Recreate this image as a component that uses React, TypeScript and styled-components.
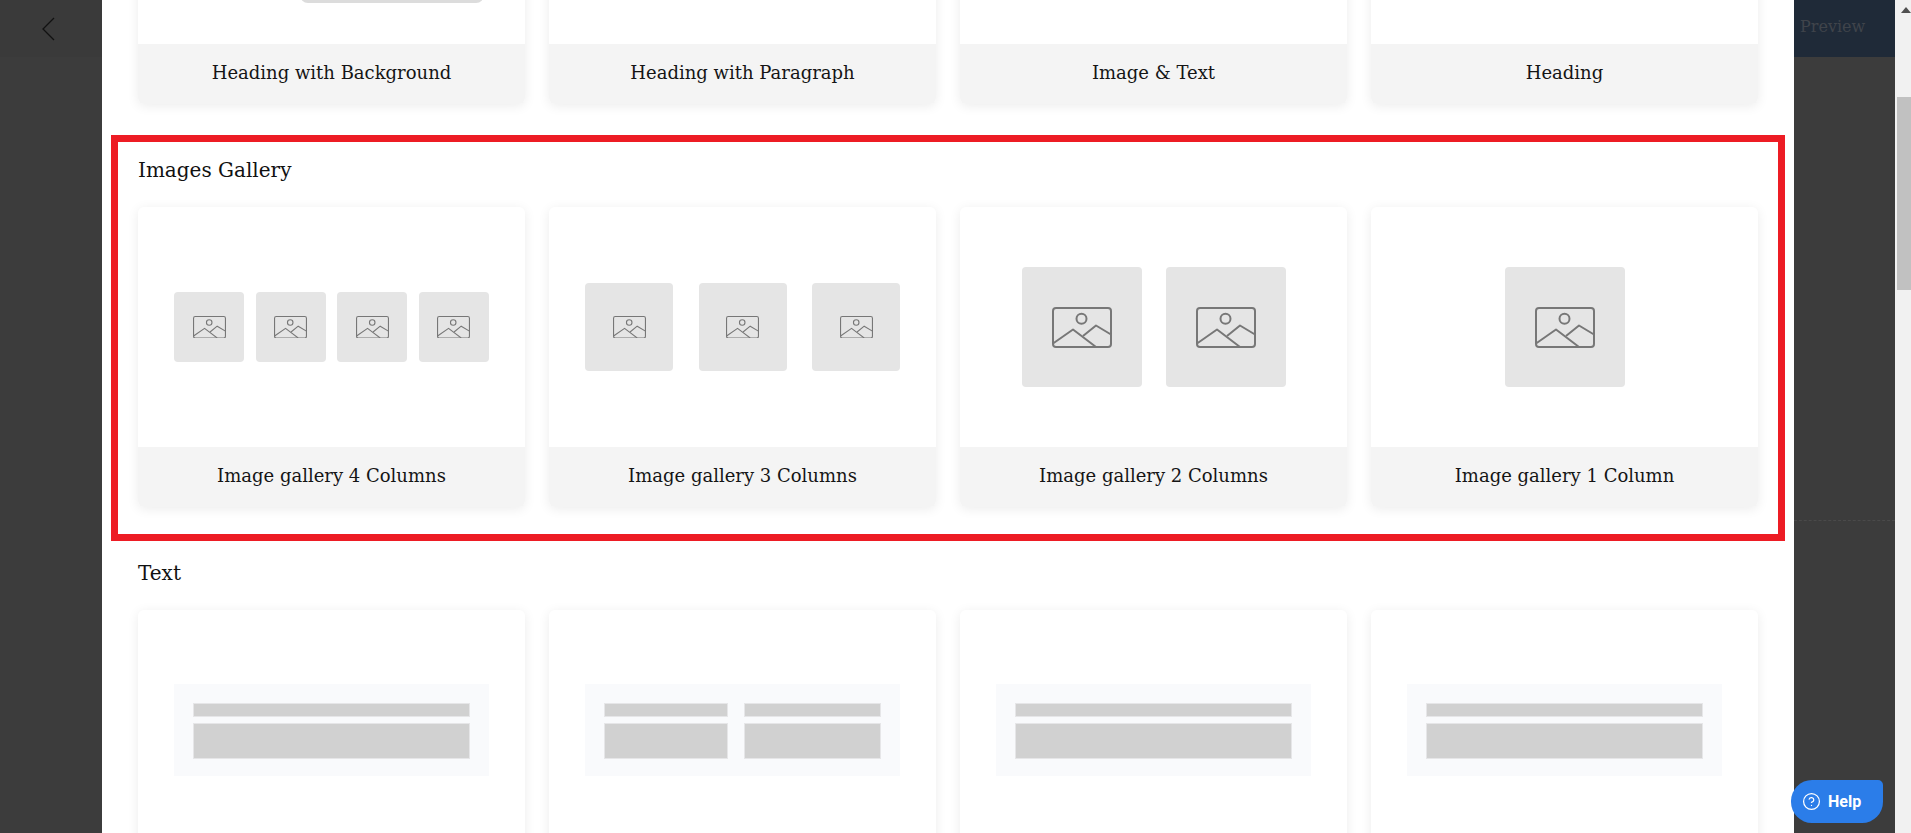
import * as React from 'react'
import styled, { createGlobalStyle } from 'styled-components'
import { CircleHelp } from 'lucide-react'

const GlobalStyle = createGlobalStyle`
  html, body {
    margin: 0;
    padding: 0;
    height: 100%;
    overflow: hidden;
    background: #3c3c3c;
  }

  * {
    box-sizing: border-box;
  }
`

const Page = styled.div`
  display: flex;
  width: 1911px;
  height: 833px;
  overflow: hidden;
  background: #3c3c3c;
  font-family: "DejaVu Serif", "Liberation Serif", serif;
`

const LeftRail = styled.div`
  flex: 0 0 102px;
`

const BackBar = styled.div`
  display: flex;
  align-items: center;
  height: 57px;
  padding-left: 41px;
  background: #3a3a3a;
`

const Modal = styled.main`
  flex: 0 0 1692px;
  height: 833px;
  overflow: hidden;
  background: #fff;
`

// the list is scrolled: the first row of cards sits mostly above the fold
const ScrollContent = styled.div`
  margin-top: -214px;
`

const Section = styled.section<{ $highlight?: boolean }>`
  margin: 0 9px;
  border-style: solid;
  border-color: ${props => (props.$highlight ? '#ed1c24' : 'transparent')};
  border-width: ${props => (props.$highlight ? '7px' : '0 7px')};
  padding: ${props => (props.$highlight ? '14px 20px 27px' : '18px 20px 31px')};
`

const SectionTitle = styled.h2`
  margin: 0 0 23px;
  height: 28px;
  font-size: 20px;
  font-weight: 400;
  line-height: 28px;
  color: #111;
`

const CardGrid = styled.div`
  display: grid;
  grid-template-columns: repeat(4, 387px);
  column-gap: 24px;
`

const Card = styled.div`
  display: flex;
  flex-direction: column;
  border-radius: 6px;
  background: #fff;
  box-shadow: 0 2px 12px rgba(0, 0, 0, .08);
  overflow: hidden;
`

const Preview = styled.div`
  display: flex;
  align-items: center;
  justify-content: center;
  height: 240px;
  padding: 0 36px;
`

const HeadingPreview = styled(Preview)`
  align-items: flex-end;
  justify-content: flex-end;
  padding: 0 41px 41px 0;
`

const HeadingPill = styled.div`
  width: 184px;
  height: 40px;
  border-radius: 8px;
  background: #dcdcdc;
`

const CardLabel = styled.div`
  height: 60px;
  background: #f4f4f4;
  font-size: 18px;
  line-height: 58px;
  text-align: center;
  color: #151515;
`

const TileRow = styled.div<{ $spread?: boolean }>`
  display: flex;
  justify-content: ${props => (props.$spread ? 'space-between' : 'center')};
  gap: ${props => (props.$spread ? '0' : '24px')};
  width: ${props => (props.$spread ? '315px' : '314px')};
`

const Tile = styled.div<{ $size: number }>`
  display: flex;
  align-items: center;
  justify-content: center;
  flex: 0 0 ${props => props.$size}px;
  height: ${props => props.$size}px;
  border-radius: 4px;
  background: #e5e5e5;
`

const TextBlock = styled.div<{ $columns: string }>`
  display: grid;
  grid-template-columns: ${props => props.$columns};
  grid-template-rows: 14px 36px;
  column-gap: 16px;
  row-gap: 6px;
  width: 315px;
  height: 92px;
  padding: 19px 19px 17px;
  background: #f9fafc;
`

const TextBar = styled.div`
  border: 1px solid #e6e6e8;
  background: #d1d1d1;
`

const RightRail = styled.div`
  flex: 0 0 101px;
`

const PreviewButton = styled.div`
  height: 57px;
  padding-left: 6px;
  background: #1f2a38;
  font-size: 16px;
  line-height: 54px;
  color: #3f444b;
`

const RailDivider = styled.div`
  margin-top: 463px;
  border-top: 1px dashed #4a4a4a;
`

const ScrollBar = styled.div`
  display: flex;
  flex-direction: column;
  align-items: flex-end;
  flex: 0 0 16px;
  background: #f1f1f1;
`

const ScrollArrow = styled.div`
  margin: 7px 0 0;
  border-style: solid;
  border-width: 0 5px 6px;
  border-color: transparent transparent #505050;
`

const ScrollThumb = styled.div`
  width: 14px;
  height: 193px;
  margin-top: 84px;
  background: #c1c1c1;
`

const HelpButton = styled.div`
  position: fixed;
  left: 1791px;
  top: 780px;
  display: flex;
  align-items: center;
  gap: 7px;
  width: 92px;
  height: 43px;
  padding-left: 11px;
  border-radius: 21px 5px 21px 21px;
  background: #2b7de9;
  font-family: Roboto, "Liberation Sans", sans-serif;
  font-size: 16px;
  font-weight: 700;
  color: #fff;
`

const ImageIcon = ({ width }: { width: number }) => (
  <svg width={width} viewBox="0 0 60 41" fill="none" stroke="#777" strokeWidth="2" strokeLinejoin="round">
    <rect x="1" y="1" width="58" height="39" rx="3" />
    <circle cx="29.5" cy="11.7" r="5" />
    <path d="M1 36.5 L21 22.5 L44 40" />
    <path d="M31 29 L44 18.5 L59 27.5" />
  </svg>
)

const BackIcon = () => (
  <svg width="14" height="24" viewBox="0 0 14 24" fill="none" stroke="#111" strokeWidth="1.3">
    <path d="M13 1 L2 12 L13 23" />
  </svg>
)

type Gallery = { label: string, count: number, tile: number, icon: number }

const headings = ['Heading with Background', 'Heading with Paragraph', 'Image & Text', 'Heading']

const galleries: Gallery[] = [
  { label: 'Image gallery 4 Columns', count: 4, tile: 70, icon: 33 },
  { label: 'Image gallery 3 Columns', count: 3, tile: 88, icon: 33 },
  { label: 'Image gallery 2 Columns', count: 2, tile: 120, icon: 60 },
  { label: 'Image gallery 1 Column', count: 1, tile: 120, icon: 60 },
]

const textLayouts = ['277px', '124px 137px', '277px', '277px']

const App = () => {
  return (
    <Page>
      <GlobalStyle />
      <LeftRail>
        <BackBar>
          <BackIcon />
        </BackBar>
      </LeftRail>

      <Modal>
        <ScrollContent>
          <Section>
            <CardGrid>
              {headings.map((label, i) => (
                <Card key={label}>
                  {i === 0 ? (
                    <HeadingPreview>
                      <HeadingPill />
                    </HeadingPreview>
                  ) : (
                    <Preview />
                  )}
                  <CardLabel>{label}</CardLabel>
                </Card>
              ))}
            </CardGrid>
          </Section>

          <Section $highlight>
            <SectionTitle>Images Gallery</SectionTitle>
            <CardGrid>
              {galleries.map(gallery => (
                <Card key={gallery.label}>
                  <Preview>
                    <TileRow $spread={gallery.count > 2}>
                      {Array.from({ length: gallery.count }).map((_, i) => (
                        <Tile key={i} $size={gallery.tile}>
                          <ImageIcon width={gallery.icon} />
                        </Tile>
                      ))}
                    </TileRow>
                  </Preview>
                  <CardLabel>{gallery.label}</CardLabel>
                </Card>
              ))}
            </CardGrid>
          </Section>

          <Section>
            <SectionTitle>Text</SectionTitle>
            <CardGrid>
              {textLayouts.map((columns, i) => (
                <Card key={i}>
                  <Preview>
                    <TextBlock $columns={columns}>
                      {columns.split(' ').map((_, j) => <TextBar key={`top-${j}`} />)}
                      {columns.split(' ').map((_, j) => <TextBar key={`bottom-${j}`} />)}
                    </TextBlock>
                  </Preview>
                </Card>
              ))}
            </CardGrid>
          </Section>
        </ScrollContent>
      </Modal>

      <RightRail>
        <PreviewButton>Preview</PreviewButton>
        <RailDivider />
      </RightRail>

      <ScrollBar>
        <ScrollArrow />
        <ScrollThumb />
      </ScrollBar>

      <HelpButton>
        <CircleHelp size={19} strokeWidth={1.6} />
        Help
      </HelpButton>
    </Page>
  )
}

export default App
